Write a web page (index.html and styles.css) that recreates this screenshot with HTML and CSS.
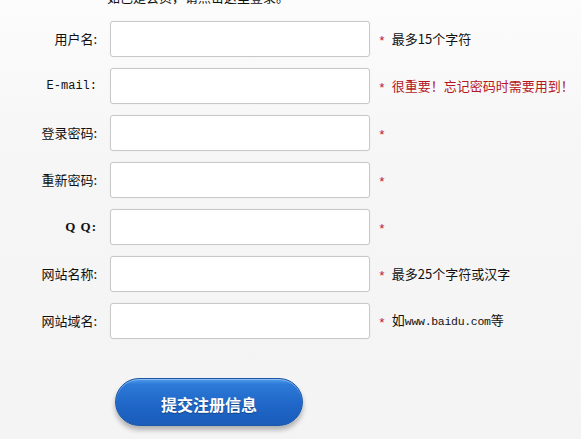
FILE: index.html
```html
<!DOCTYPE html>
<html lang="zh">
<head>
<meta charset="utf-8">
<link rel="stylesheet" href="styles.css">
</head>
<body>
<div class="page">
  <p class="intro">如已是会员，请点击这里登录。</p>
  <form class="reg">
    <div class="row"><label class="lbl">用户名:</label><input class="field" type="text"><span class="star">*</span><span class="hint">最多15个字符</span></div>
    <div class="row"><label class="lbl mono">E-mail:</label><input class="field" type="text"><span class="star">*</span><span class="hint warn">很重要！忘记密码时需要用到！</span></div>
    <div class="row"><label class="lbl">登录密码:</label><input class="field" type="password"><span class="star">*</span></div>
    <div class="row"><label class="lbl">重新密码:</label><input class="field" type="password"><span class="star">*</span></div>
    <div class="row"><label class="lbl qq">Q Q:</label><input class="field" type="text"><span class="star">*</span></div>
    <div class="row"><label class="lbl">网站名称:</label><input class="field" type="text"><span class="star">*</span><span class="hint">最多25个字符或汉字</span></div>
    <div class="row"><label class="lbl">网站域名:</label><input class="field" type="text"><span class="star">*</span><span class="hint">如<span class="latin">www.baidu.com</span>等</span></div>
    <div class="actions"><button class="submit" type="button">提交注册信息</button></div>
  </form>
</div>
</body>
</html>
```
FILE: styles.css
```css
html, body {
  margin: 0;
  padding: 0;
}
body {
  width: 581px;
  height: 439px;
  overflow: hidden;
  background: linear-gradient(to bottom, #fcfcfc 0%, #f6f6f6 35%, #f4f4f4 100%);
  font-family: "Noto Sans CJK SC", "Liberation Sans", sans-serif;
  font-size: 13px;
  color: #111;
}
.page {
  margin-top: -11px;
}
.intro {
  margin: 0 0 16px 107px;
  line-height: 16px;
  height: 16px;
  color: #111;
}
.reg {
  display: flex;
  flex-direction: column;
  gap: 11px;
}
.row {
  display: flex;
  align-items: center;
  height: 36px;
}
.lbl {
  box-sizing: border-box;
  width: 97px;
  flex: none;
  text-align: right;
  margin-right: 13px;
  color: #111;
  line-height: 16px;
}
.mono {
  font-family: "Liberation Mono", monospace;
  font-size: 12px;
}
.qq {
  font-weight: bold;
  font-family: "Liberation Serif", serif;
  letter-spacing: 1px;
}
.latin {
  font-family: "Liberation Mono", monospace;
  font-size: 11.5px;
  letter-spacing: -0.3px;
}
.field {
  box-sizing: border-box;
  width: 260px;
  height: 36px;
  flex: none;
  margin: 0;
  border: 1px solid #c8c8c8;
  border-radius: 3px;
  background: #fff;
  box-shadow: 0 0 2px rgba(0,0,0,0.05);
  padding: 0 6px;
}
.star {
  color: #c4142a;
  margin-left: 8px;
  margin-right: 6px;
  font-family: "Liberation Mono", monospace;
  font-size: 13px;
  padding-top: 5px;
}
.hint {
  color: #111;
  line-height: 16px;
}
.hint.warn {
  color: #b5161f;
}
.actions {
  margin-top: 28px;
  padding-left: 115px;
}
.submit {
  width: 188px;
  height: 48px;
  border: 1px solid #1d58a8;
  border-radius: 24px;
  background: linear-gradient(to bottom, #4f9cec 0%, #2d7ad8 12%, #1f67c8 55%, #1a5cba 100%);
  box-shadow: inset 0 1px 0 rgba(255,255,255,0.35), 0 4px 5px rgba(0,0,0,0.28);
  color: #fff;
  font-family: "Noto Sans CJK SC", sans-serif;
  font-size: 16px;
  font-weight: bold;
  padding: 3px 0 0 0;
  text-shadow: 0 1px 1px rgba(0,0,0,0.3);
}
```
